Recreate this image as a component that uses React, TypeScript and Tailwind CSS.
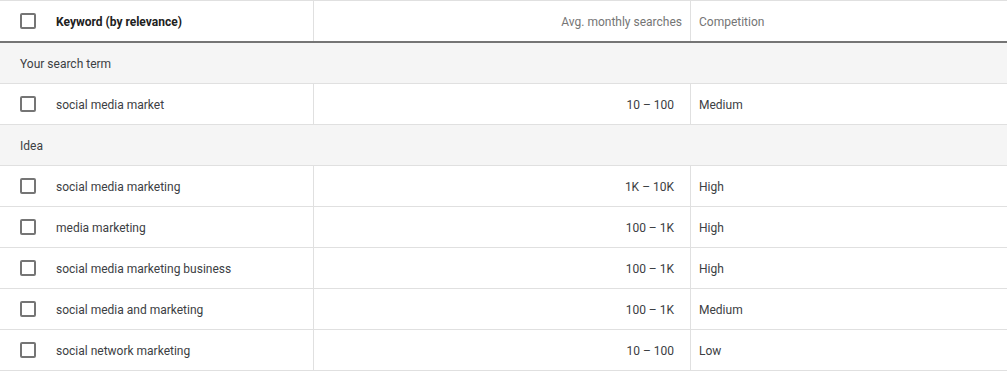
import React from "react";

const Box = () => (
  <div className="w-4 h-4 border-2 border-[#757575] rounded-[2px] shrink-0" />
);

const rows1 = [{ k: "social media market", a: "10 – 100", c: "Medium" }];
const rows2 = [
  { k: "social media marketing", a: "1K – 10K", c: "High" },
  { k: "media marketing", a: "100 – 1K", c: "High" },
  { k: "social media marketing business", a: "100 – 1K", c: "High" },
  { k: "social media and marketing", a: "100 – 1K", c: "Medium" },
  { k: "social network marketing", a: "10 – 100", c: "Low" },
];

function Row({ k, a, c }: { k: string; a: string; c: string }) {
  return (
    <div className="flex h-[41px] border-b border-[#e0e0e0] text-[12px] text-[#3c4043]">
      <div className="w-[314px] border-r border-[#e0e0e0] flex items-center pl-5 gap-5">
        <Box />
        <span className="pt-[2px]">{k}</span>
      </div>
      <div className="w-[377px] border-r border-[#e0e0e0] flex items-center justify-end pr-4 pt-[2px]">
        {a}
      </div>
      <div className="flex-1 flex items-center pl-2 pt-[2px]">{c}</div>
    </div>
  );
}

function Group({ t }: { t: string }) {
  return (
    <div className="h-[41px] border-b border-[#e0e0e0] bg-[#f5f5f5] flex items-center pl-5 pt-[2px] text-[12px] text-[#3c4043]">
      {t}
    </div>
  );
}

export default function App() {
  return (
    <div
      className="w-[1007px] h-[371px] bg-white overflow-hidden"
      style={{ fontFamily: "Roboto, 'Liberation Sans', sans-serif" }}
    >
      <div className="flex h-[43px] border-t border-[#e0e0e0] border-b-2 border-b-[#757575] text-[12px]">
        <div className="w-[314px] border-r border-[#e0e0e0] flex items-center pl-5 gap-5">
          <Box />
          <span className="font-bold text-[#212121] pt-[1px]">Keyword (by relevance)</span>
        </div>
        <div className="w-[377px] border-r border-[#e0e0e0] flex items-center justify-end pr-2 pt-[1px] text-[#757575]">
          Avg. monthly searches
        </div>
        <div className="flex-1 flex items-center pl-2 pt-[1px] text-[#757575]">Competition</div>
      </div>
      <Group t="Your search term" />
      {rows1.map((r) => (
        <Row key={r.k} {...r} />
      ))}
      <Group t="Idea" />
      {rows2.map((r) => (
        <Row key={r.k} {...r} />
      ))}
    </div>
  );
}
